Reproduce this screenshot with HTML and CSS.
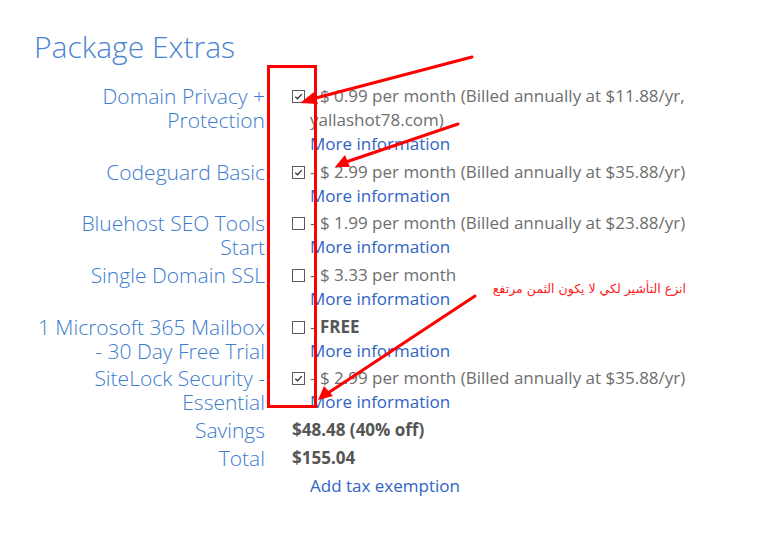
FILE: index.html
```html
<!DOCTYPE html>
<html>
<head>
<meta charset="utf-8">
<link rel="stylesheet" href="styles.css">
</head>
<body>
<div class="page">
  <h1 class="title">Package Extras</h1>
  <div class="extras">
    <div class="label">Domain Privacy +<br>Protection</div>
    <div class="value">
      <span class="cb checked"><svg viewBox="0 0 12 12"><path d="M2.5 6.2 L5 8.5 L9.6 3.4" /></svg></span>
      <div class="desc"><span class="price">- $ 0.99 per month (Billed annually at $11.88/yr, yallashot78.com)</span><a class="more">More information</a></div>
    </div>

    <div class="label">Codeguard Basic</div>
    <div class="value">
      <span class="cb checked"><svg viewBox="0 0 12 12"><path d="M2.5 6.2 L5 8.5 L9.6 3.4" /></svg></span>
      <div class="desc"><span class="price">- $ 2.99 per month (Billed annually at $35.88/yr)</span><a class="more">More information</a></div>
    </div>

    <div class="label">Bluehost SEO Tools<br>Start</div>
    <div class="value">
      <span class="cb"></span>
      <div class="desc"><span class="price">- $ 1.99 per month (Billed annually at $23.88/yr)</span><a class="more">More information</a></div>
    </div>

    <div class="label">Single Domain SSL</div>
    <div class="value">
      <span class="cb"></span>
      <div class="desc"><span class="price">- $ 3.33 per month</span><a class="more">More information</a></div>
    </div>

    <div class="label">1 Microsoft 365 Mailbox<br>- 30 Day Free Trial</div>
    <div class="value">
      <span class="cb"></span>
      <div class="desc"><span class="price">- <b>FREE</b></span><a class="more">More information</a></div>
    </div>

    <div class="label">SiteLock Security -<br>Essential</div>
    <div class="value">
      <span class="cb checked"><svg viewBox="0 0 12 12"><path d="M2.5 6.2 L5 8.5 L9.6 3.4" /></svg></span>
      <div class="desc"><span class="price">- $ 2.99 per month (Billed annually at $35.88/yr)</span><a class="more">More information</a></div>
    </div>

    <div class="label">Savings</div>
    <div class="value total">$48.48 (40% off)</div>

    <div class="label">Total</div>
    <div class="value total">$155.04</div>

    <div class="label"></div>
    <div class="value"><a class="more tax">Add tax exemption</a></div>
  </div>

  <svg class="annot" width="762" height="550" viewBox="0 0 762 550">
    <rect x="268.5" y="66.5" width="47" height="340" fill="none" stroke="#ff0000" stroke-width="3"/>
    <g stroke="#ff0000" stroke-width="3" stroke-linecap="round">
      <line x1="472" y1="57" x2="312" y2="99"/>
      <line x1="458" y1="124" x2="346" y2="162"/>
      <line x1="475" y1="296" x2="328" y2="393"/>
    </g>
    <g fill="#ff0000">
      <polygon points="300,103 314,92 318,104"/>
      <polygon points="335,167 345,155 350,167"/>
      <polygon points="318,400 324,386 333,396"/>
    </g>
  </svg>
  <div class="note">انزع التأشير لكي لا يكون الثمن مرتفع</div>
</div>
</body>
</html>
```

FILE: styles.css
```css
html, body {
  margin: 0;
  padding: 0;
  background: #ffffff;
}
.page {
  position: relative;
  width: 762px;
  height: 550px;
  overflow: hidden;
  font-family: "Open Sans", "Liberation Sans", sans-serif;
}
.title {
  margin: 0;
  padding: 27px 0 0 34px;
  font-size: 30px;
  line-height: 40px;
  font-weight: 300;
  color: #4a84d2;
}
.extras {
  display: grid;
  grid-template-columns: 231px 1fr;
  column-gap: 27px;
  row-gap: 3.7px;
  margin-top: 17px;
  margin-left: 34px;
}
.label {
  text-align: right;
  font-size: 21px;
  line-height: 24px;
  font-weight: 300;
  color: #3d7bcd;
  white-space: nowrap;
}
.value {
  display: flex;
  align-items: flex-start;
  gap: 5px;
  font-size: 17px;
  line-height: 24px;
  color: #6e6e6e;
}
.desc {
  display: flex;
  flex-direction: column;
}
.price b {
  font-weight: 700;
  color: #555;
}
.more {
  color: #3063c4;
  font-weight: 400;
}
.tax {
  margin-left: 18px;
}
.cb {
  flex: none;
  box-sizing: border-box;
  width: 13px;
  height: 13px;
  margin-top: 6px;
  border: 1px solid #5a5a5a;
  background: #fff;
  display: flex;
}
.cb svg {
  width: 11px;
  height: 11px;
  fill: none;
  stroke: #333;
  stroke-width: 1.4;
}
.total {
  font-weight: 700;
  color: #555;
}
.annot {
  position: absolute;
  left: 0;
  top: 0;
}
.note {
  position: absolute;
  left: 486px;
  top: 279px;
  width: 200px;
  text-align: right;
  direction: rtl;
  font-family: "DejaVu Sans", sans-serif;
  font-size: 12.5px;
  line-height: 20px;
  color: #ff2020;
}
```
